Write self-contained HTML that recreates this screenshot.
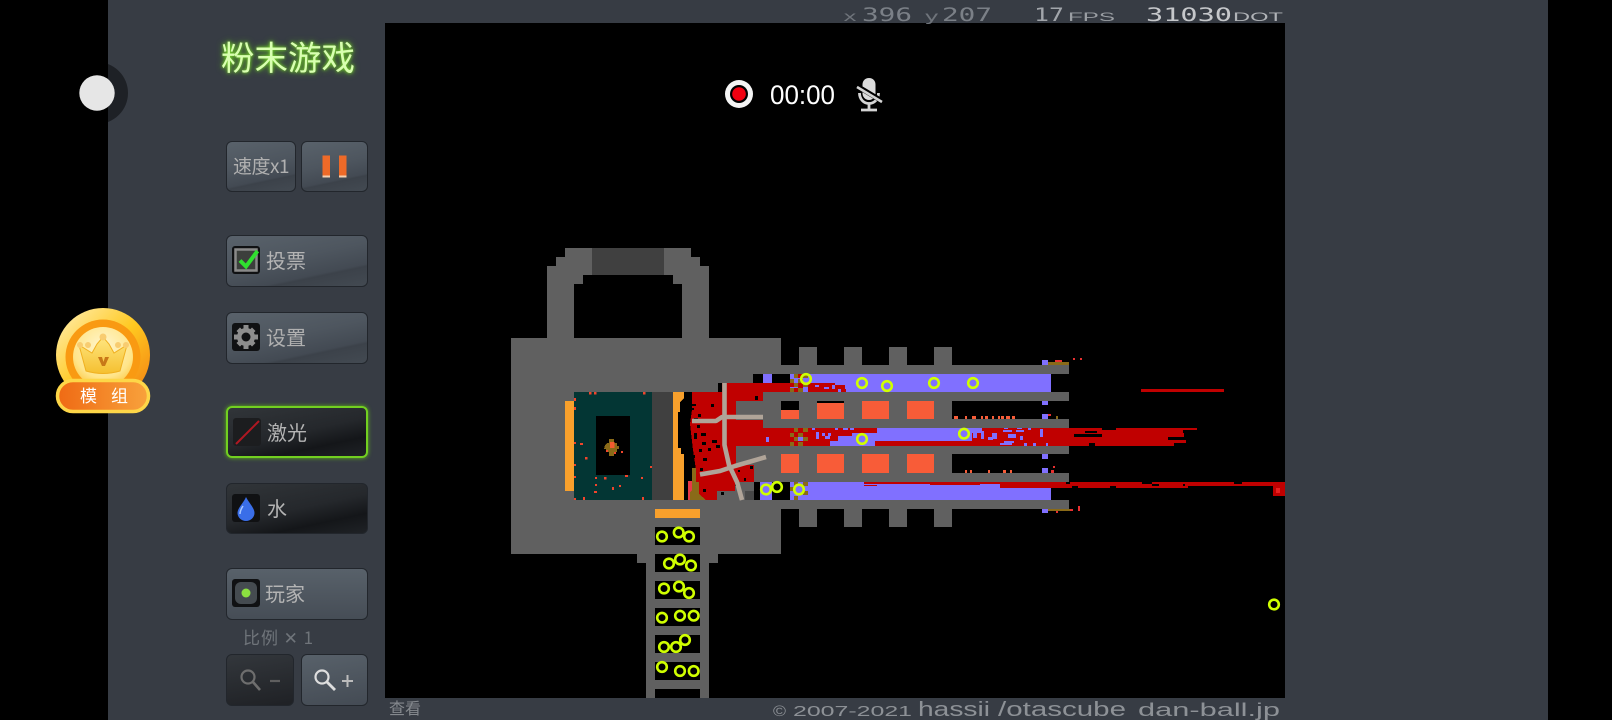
<!DOCTYPE html>
<html><head><meta charset="utf-8"><title>粉末游戏</title>
<style>
html,body{margin:0;padding:0;width:1612px;height:720px;overflow:hidden;background:#000}
body{position:relative;font-family:"Liberation Sans","WenQuanYi Zen Hei","Noto Sans CJK SC",sans-serif}
#panel{position:absolute;left:108px;top:0;width:1440px;height:720px;background:#373c44}
#cv{position:absolute;left:0;top:0}
.b{position:absolute;box-sizing:border-box;border:1.5px solid #22262c;border-radius:6px;background:linear-gradient(168deg,#59626b 0%,#4e565f 45%,#434a53 72%,#3c424a 75%,#434a52 100%);color:#b4b4b4;font-size:20px;line-height:48px;white-space:nowrap;font-family:"WenQuanYi Zen Hei","Noto Sans CJK SC",sans-serif}
.d{background:linear-gradient(168deg,#313539 0%,#25282c 50%,#141619 75%,#1f2226 100%)}
.i{position:absolute;left:5px;top:10px;width:28px;height:28px;background:#101113;border-radius:3px}
.i svg,.b svg{display:block}
.t{position:absolute;left:39px;top:0}
#title{position:absolute;left:221px;top:35px;font:33.5px/42px "WenQuanYi Zen Hei","Noto Sans CJK SC",sans-serif;color:#d8ffb0;text-shadow:0 0 3px #7fe02c,0 0 7px #5cb81e;white-space:nowrap}
</style></head><body>
<div id="panel"></div>
<svg id="cv" width="1612" height="720" viewBox="0 0 1612 720" xmlns="http://www.w3.org/2000/svg">
<defs>
<radialGradient id="gd" cx="50%" cy="35%" r="70%"><stop offset="0" stop-color="#fff6d0"/><stop offset=".7" stop-color="#ffe58a"/><stop offset="1" stop-color="#fbc640"/></radialGradient>
<linearGradient id="go" x1="0" y1="0" x2="1" y2="1"><stop offset="0" stop-color="#fff0b8"/><stop offset=".5" stop-color="#ffc920"/><stop offset="1" stop-color="#f27a10"/></linearGradient>
<linearGradient id="pl" x1="0" y1="0" x2="1" y2="0"><stop offset="0" stop-color="#ef6a14"/><stop offset="1" stop-color="#f8a23c"/></linearGradient>
<linearGradient id="cr" x1="0" y1="0" x2="0" y2="1"><stop offset="0" stop-color="#ffe680"/><stop offset="1" stop-color="#f5c030"/></linearGradient>
</defs>
<circle cx="97" cy="93" r="31" fill="#1e2126"/><rect x="0" y="50" width="108" height="90" fill="#000"/>
<circle cx="97" cy="93" r="17.7" fill="#e6e6e6"/>
<rect x="385" y="23" width="900" height="675" fill="#000"/>

<g shape-rendering="crispEdges">
<g fill="#606060">
<rect x="565" y="248" width="126" height="9"/><rect x="556" y="257" width="144" height="9"/><rect x="547" y="266" width="162" height="72"/>
<rect x="511" y="338" width="270" height="216"/><rect x="637" y="553" width="81" height="10"/><rect x="646" y="553" width="63" height="145"/>
<rect x="781" y="365" width="288" height="9"/><rect x="763" y="392" width="306" height="9"/><rect x="763" y="419" width="306" height="9"/><rect x="763" y="446" width="306" height="8"/><rect x="763" y="473" width="306" height="9"/><rect x="781" y="500" width="288" height="9"/>
<rect x="763" y="392" width="18" height="90"/>
<rect x="799" y="347" width="18" height="18"/><rect x="844" y="347" width="18" height="18"/><rect x="889" y="347" width="18" height="18"/><rect x="934" y="347" width="18" height="18"/>
<rect x="799" y="509" width="18" height="18"/><rect x="844" y="509" width="18" height="18"/><rect x="889" y="509" width="18" height="18"/><rect x="934" y="509" width="18" height="18"/>
<rect x="799" y="401" width="18" height="72"/><rect x="844" y="401" width="18" height="72"/><rect x="889" y="401" width="18" height="72"/><rect x="934" y="401" width="18" height="72"/>
<rect x="781" y="374" width="27" height="18"/><rect x="781" y="482" width="27" height="18"/>
</g>
<rect x="592" y="248" width="72" height="27" fill="#404040"/>
<rect x="583" y="275" width="90" height="9" fill="#000"/><rect x="574" y="284" width="108" height="54" fill="#000"/>

<!-- left chamber -->
<rect x="565" y="401" width="9" height="90" fill="#f8a02c"/>
<rect x="574" y="392" width="78" height="108" fill="#033634"/>
<rect x="596" y="416" width="34" height="59" fill="#000"/>
<rect x="652" y="392" width="21" height="108" fill="#404040"/>
<rect x="673" y="392" width="30" height="108" fill="#000"/>
<path d="M673 392H684V398L680 402V412H678V448H681V454H684V500H673Z" fill="#f8a02c"/>
<path d="M605 445l2-2h2v-4h5v4h3v3h2v3h-2v3h-3v4h-5v-4h-3v-3h-2z" fill="#8a6a18"/><rect x="610" y="442" width="4.5" height="6" fill="#f25c30"/>
<g fill="#f0452c">
<rect x="589" y="392" width="2.5" height="2.5"/><rect x="594" y="392" width="2.5" height="2.5"/><rect x="643" y="392" width="2.5" height="2.5"/><rect x="574" y="398" width="2" height="3"/><rect x="574" y="407" width="2" height="3"/><rect x="580" y="443" width="3" height="2"/><rect x="574" y="442" width="2" height="2"/><rect x="574" y="464" width="2" height="2"/><rect x="585" y="457" width="2.5" height="2.5"/><rect x="574" y="476" width="2" height="2"/><rect x="574" y="498" width="2" height="2"/><rect x="594" y="491" width="3" height="2"/><rect x="595" y="477" width="2" height="2"/><rect x="604" y="477" width="2.5" height="2.5"/><rect x="595" y="484" width="2" height="2"/><rect x="612" y="487" width="2" height="3"/><rect x="619" y="485" width="2" height="2"/><rect x="625" y="475" width="3" height="2"/><rect x="641" y="477" width="2" height="2"/><rect x="650" y="466" width="2" height="2"/><rect x="642" y="497" width="2" height="3"/><rect x="583" y="497" width="2" height="3"/><rect x="621" y="451" width="2" height="2"/><rect x="614" y="452" width="2" height="2"/><rect x="606" y="450" width="2" height="2"/>
</g>

<!-- red area -->
<path d="M692 392H718V383H790V392H763V401H736V420H763V428H790V446H736V465H754V482H735V491H717V500H697L695 488 696 470 693 450 690 424 692 410Z" fill="#c00000"/>
<path d="M717 491H745V500H717Z" fill="#606060"/><path d="M745 491H755V500H745Z" fill="#484848"/>
<path d="M688 481h4v19h-4z" fill="#e83848"/>
<path d="M692 468h4v14h3v12l7 6h-16v-8l2-2z" fill="#8a6a18"/>
<g fill="#000">
<rect x="718" y="383" width="4" height="9"/><rect x="755" y="396" width="3" height="4"/><rect x="692" y="404" width="4" height="2"/><rect x="690" y="408" width="4" height="2"/><rect x="711" y="404" width="3" height="3"/><rect x="694" y="418" width="4" height="3"/><rect x="698" y="414" width="3" height="3"/><rect x="697" y="425" width="3" height="3"/><rect x="701" y="433" width="5" height="3"/><rect x="694" y="433" width="3" height="6"/><rect x="702" y="442" width="4" height="3"/><rect x="712" y="440" width="5" height="3"/><rect x="716" y="445" width="4" height="3"/><rect x="699" y="449" width="3" height="3"/><rect x="708" y="448" width="3" height="3"/><rect x="692" y="455" width="3" height="3"/><rect x="703" y="458" width="4" height="3"/><rect x="700" y="468" width="3" height="3"/><rect x="703" y="489" width="3" height="3"/><rect x="735" y="483" width="3" height="3"/><rect x="744" y="478" width="2" height="3"/><rect x="738" y="470" width="2" height="2"/><rect x="721" y="492" width="3" height="3"/><rect x="750" y="466" width="3" height="3"/>
</g>

<!-- channels -->
<rect x="808" y="374" width="243" height="18" fill="#8070ff"/>
<rect x="808" y="482" width="243" height="18" fill="#8070ff"/>
<rect x="808" y="428" width="240" height="18" fill="#c00000"/>
<path d="M877 428H982V433H972V441H875V446H830V441H838V436H852V433H877Z" fill="#8070ff"/>
<path d="M808 383H835V385H845V389H846V392H808Z" fill="#c00000"/>
<g fill="#8070ff"><rect x="815" y="385" width="4" height="2"/><rect x="824" y="387" width="5" height="2"/><rect x="832" y="385" width="3" height="4"/><rect x="838" y="389" width="3" height="3"/></g>
<rect x="763" y="374" width="9" height="9" fill="#8070ff"/>
<rect x="753" y="374" width="10" height="9" fill="#000"/><rect x="772" y="374" width="18" height="9" fill="#000"/>
<rect x="754" y="482" width="36" height="18" fill="#000"/>
<rect x="760" y="482" width="12" height="18" fill="#8070ff"/>
<rect x="766" y="437" width="3" height="5" fill="#8070ff"/>

<!-- checkers -->
<g fill="#8070ff"><rect x="790" y="374" width="18" height="18"/></g>
<rect x="790" y="428" width="18" height="18" fill="#c00000"/>
<rect x="790" y="482" width="18" height="18" fill="#8070ff"/>
<g fill="#8a6a18">
<rect x="794" y="374" width="4" height="4"/><rect x="803" y="374" width="5" height="4"/><rect x="790" y="379" width="4" height="4"/><rect x="798" y="379" width="5" height="4"/><rect x="794" y="383" width="4" height="4"/><rect x="803" y="383" width="5" height="4"/><rect x="790" y="388" width="4" height="4"/><rect x="798" y="388" width="5" height="4"/>
<rect x="794" y="428" width="4" height="4"/><rect x="803" y="428" width="5" height="4"/><rect x="790" y="433" width="4" height="4"/><rect x="798" y="433" width="5" height="4"/><rect x="794" y="437" width="4" height="4"/><rect x="803" y="437" width="5" height="4"/><rect x="790" y="442" width="4" height="4"/><rect x="798" y="442" width="5" height="4"/>
<rect x="794" y="482" width="4" height="4"/><rect x="803" y="482" width="5" height="4"/><rect x="790" y="487" width="4" height="4"/><rect x="803" y="491" width="5" height="4"/><rect x="794" y="496" width="4" height="4"/>
</g>
<g fill="#c00000"><rect x="798" y="383" width="5" height="5"/><rect x="794" y="388" width="4" height="4"/><rect x="798" y="374" width="5" height="4"/><rect x="790" y="383" width="4" height="4"/></g>
<rect x="798" y="437" width="5" height="4" fill="#8070ff"/>

<!-- channel 2 speckle -->
<g fill="#8070ff">
<rect x="812" y="428" width="3" height="2"/><rect x="816" y="432" width="3" height="7"/><rect x="822" y="433" width="3" height="3"/><rect x="825" y="436" width="5" height="3"/><rect x="828" y="433" width="3" height="3"/><rect x="835" y="428" width="3" height="2"/><rect x="843" y="428" width="5" height="2"/><rect x="850" y="428" width="4" height="2"/>
<rect x="973" y="429" width="4" height="9"/><rect x="981" y="431" width="3" height="8"/><rect x="988" y="437" width="5" height="3"/><rect x="992" y="433" width="5" height="6"/><rect x="1003" y="430" width="9" height="2"/><rect x="1008" y="434" width="8" height="4"/><rect x="1016" y="430" width="8" height="2"/><rect x="1020" y="436" width="3" height="4"/><rect x="1028" y="428" width="3" height="2"/><rect x="1040" y="429" width="3" height="8"/><rect x="1004" y="441" width="10" height="2"/><rect x="1000" y="443" width="12" height="2"/><rect x="1024" y="443" width="3" height="3"/><rect x="1033" y="443" width="3" height="3"/><rect x="1046" y="443" width="2" height="3"/><rect x="1004" y="428" width="4" height="1"/><rect x="1017" y="428" width="5" height="1"/>
</g>
<g fill="#c00000"><rect x="880" y="443" width="90" height="3"/><rect x="864" y="485" width="13" height="1"/></g>

<!-- orange blocks -->
<g fill="#f85c38">
<rect x="781" y="410" width="18" height="9"/><rect x="817" y="403" width="27" height="16"/><rect x="862" y="401" width="27" height="18"/><rect x="907" y="401" width="27" height="18"/>
<rect x="781" y="454" width="18" height="19"/><rect x="817" y="454" width="27" height="19"/><rect x="862" y="454" width="27" height="19"/><rect x="907" y="454" width="27" height="19"/>
<rect x="954" y="416" width="4" height="3"/><rect x="965" y="416" width="2" height="3"/><rect x="972" y="416" width="4" height="3"/><rect x="981" y="416" width="2" height="3"/><rect x="985" y="416" width="3" height="3"/><rect x="992" y="416" width="2" height="3"/><rect x="998" y="416" width="2" height="3"/><rect x="1001" y="416" width="3" height="3"/><rect x="1006" y="416" width="4" height="3"/><rect x="1012" y="416" width="3" height="3"/>
<rect x="965" y="470" width="2" height="3"/><rect x="970" y="470" width="2" height="3"/><rect x="988" y="470" width="2" height="3"/><rect x="1003" y="470" width="3" height="3"/><rect x="1010" y="470" width="2" height="3"/>
</g>

<!-- right overflow -->
<g fill="#8070ff">
<rect x="1042" y="360" width="6" height="5"/><rect x="1042" y="401" width="6" height="4"/><rect x="1042" y="414" width="6" height="5"/><rect x="1042" y="454" width="6" height="5"/><rect x="1042" y="468" width="6" height="5"/><rect x="1042" y="509" width="6" height="4"/>
</g>
<rect x="1048" y="362" width="21" height="3" fill="#8a6a18"/><rect x="1055" y="360" width="7" height="2" fill="#e83030"/>
<rect x="1048" y="509" width="23" height="2" fill="#8a6a18"/><rect x="1070" y="509" width="3" height="2" fill="#e83030"/>
<g fill="#e83030"><rect x="1073" y="358" width="2" height="2"/><rect x="1080" y="358" width="2" height="2"/><rect x="1078" y="506" width="2" height="5"/><rect x="1056" y="511" width="2" height="2"/><rect x="1048" y="414" width="3" height="2"/><rect x="1053" y="466" width="2" height="2"/><rect x="1051" y="470" width="3" height="3"/></g>
<rect x="1056" y="416" width="2" height="3" fill="#8a6a18"/>
<rect x="1141" y="389" width="83" height="3" fill="#c00000"/>
<g fill="#c00000">
<rect x="1048" y="428" width="149" height="2"/><rect x="1048" y="430" width="135" height="3"/><rect x="1048" y="433" width="136" height="4"/><rect x="1048" y="437" width="120" height="3"/><rect x="1048" y="440" width="138" height="3"/><rect x="1048" y="443" width="126" height="3"/>
<rect x="1000" y="482" width="285" height="4"/><rect x="1000" y="486" width="188" height="2"/><rect x="1273" y="486" width="12" height="10"/>
<rect x="864" y="482" width="136" height="2"/><rect x="930" y="484" width="50" height="1"/>
</g>
<rect x="1276" y="488" width="4" height="5" fill="#e82020"/>
<g fill="#000">
<rect x="1074" y="434" width="28" height="3"/><rect x="1089" y="443" width="6" height="3"/><rect x="1085" y="431" width="12" height="2"/><rect x="1102" y="428" width="14" height="2"/>
<rect x="1072" y="486" width="6" height="2"/><rect x="1110" y="486" width="6" height="2"/><rect x="1142" y="482" width="10" height="2"/><rect x="1152" y="484" width="7" height="2"/><rect x="1234" y="482" width="8" height="2"/><rect x="1183" y="484" width="2" height="2"/><rect x="1066" y="482" width="4" height="2"/>
</g>

<!-- bottom ladder -->
<rect x="655" y="509" width="45" height="9" fill="#f8a02c"/>
<g fill="#000">
<rect x="655" y="527" width="45" height="18"/><rect x="655" y="554" width="45" height="18"/><rect x="655" y="581" width="45" height="18"/><rect x="655" y="608" width="45" height="18"/><rect x="655" y="635" width="45" height="18"/><rect x="655" y="662" width="45" height="18"/><rect x="655" y="689" width="45" height="9"/>
</g>
</g>

<!-- tan lines -->
<g fill="none" stroke="#b0a498" stroke-width="4.6" stroke-linejoin="bevel">
<path d="M724.500 383V445L729 465 737 482 742 500"/>
<path d="M692 421H716L722 417H763"/>
<path d="M700 474.500 720 471 735 466 766 457"/>
</g>

<g fill="none" stroke="#d0ff00" stroke-width="2.6">
<circle cx="662" cy="536.5" r="4.8"/><circle cx="678.7" cy="532.5" r="4.8"/><circle cx="689" cy="536.5" r="4.8"/>
<circle cx="669" cy="563.5" r="4.8"/><circle cx="680" cy="559.5" r="4.8"/><circle cx="691" cy="565.5" r="4.8"/>
<circle cx="664" cy="588.5" r="4.8"/><circle cx="679" cy="586.5" r="4.8"/><circle cx="689" cy="593" r="4.8"/>
<circle cx="662" cy="617.7" r="4.8"/><circle cx="680" cy="615.7" r="4.8"/><circle cx="693.7" cy="615.7" r="4.8"/>
<circle cx="664" cy="647" r="4.8"/><circle cx="676" cy="647" r="4.8"/><circle cx="685" cy="640" r="4.8"/>
<circle cx="662" cy="667" r="4.8"/><circle cx="680" cy="671" r="4.8"/><circle cx="693.7" cy="671" r="4.8"/>
<circle cx="806" cy="379" r="4.8"/><circle cx="862" cy="383" r="4.8"/><circle cx="887" cy="386" r="4.8"/><circle cx="934" cy="383" r="4.8"/><circle cx="973" cy="383" r="4.8"/><circle cx="964" cy="433.7" r="4.8"/><circle cx="862" cy="439" r="4.8"/>
<circle cx="766" cy="489.5" r="4.8"/><circle cx="777" cy="487" r="4.8"/><circle cx="799" cy="489.5" r="4.8"/><circle cx="1274" cy="604.5" r="4.8"/>
</g>

<!-- record widget -->
<circle cx="739" cy="94" r="14" fill="#f4f4f4"/><circle cx="739" cy="94" r="9" fill="#000"/><circle cx="739" cy="94" r="6.800" fill="#f00010"/>
<text x="770" y="104" font-family="Liberation Sans,sans-serif" font-size="27" fill="#fff" textLength="65" lengthAdjust="spacingAndGlyphs">00:00</text>
<g fill="none" stroke="#d4d4d4">
<path d="M869 78c4 0 6.500 3 6.500 6.500v9c0 3-2.500 6.500-6.500 6.500s-6.500-3.500-6.500-6.500v-9c0-3.500 2.500-6.500 6.500-6.500z" fill="#dcdcdc" stroke="none"/>
<path d="M859.500 93c0 6 4 10.500 9.500 10.500s9.500-4.500 9.500-10.500" stroke-width="2.800"/>
<path d="M869 104v5M861 110h16" stroke-width="2.800"/>
<path d="M857 86l25 15" stroke="#000" stroke-width="5"/>
<path d="M857 87l25 15" stroke-width="2.600"/>
</g>

<!-- badge -->
<circle cx="103" cy="355" r="47" fill="url(#go)"/>
<circle cx="103" cy="357" r="37.500" fill="#f99a12"/>
<circle cx="103" cy="357" r="30" fill="url(#gd)"/>
<path d="M79 345l13 8 5-9 6-7 6 7 5 9 13-8-7 26q-17 5-34 0z" fill="url(#cr)" stroke="#f0b020" stroke-width="1"/>
<circle cx="103" cy="337" r="3.500" fill="#f8cc70"/><circle cx="88" cy="345" r="3" fill="#f8cc70"/><circle cx="118" cy="345" r="3" fill="#f8cc70"/><circle cx="80" cy="345" r="3" fill="#f8cc70"/><circle cx="126" cy="345" r="3" fill="#f8cc70"/>
<path d="M98 357h4l1.500 5 1.500-5h4l-4 9h-3z" fill="#c87818"/>
<rect x="57.500" y="380.500" width="91" height="31" rx="15.500" fill="url(#pl)" stroke="#fdd648" stroke-width="3.500"/>
<text x="80" y="402" font-family="WenQuanYi Zen Hei,Noto Sans CJK SC,sans-serif" font-size="17" fill="#fff">模</text>
<text x="111" y="402" font-family="WenQuanYi Zen Hei,Noto Sans CJK SC,sans-serif" font-size="17" fill="#fff">组</text>

<!-- top techno text -->
<g font-family="DejaVu Sans Mono,monospace">
<text x="843" y="21" font-size="13" fill="#6f747b" textLength="14" lengthAdjust="spacingAndGlyphs">x</text>
<text x="862" y="21" font-size="19" fill="#7b8087" textLength="50" lengthAdjust="spacingAndGlyphs">396</text>
<text x="924" y="21" font-size="13" fill="#6f747b" textLength="15" lengthAdjust="spacingAndGlyphs">y</text>
<text x="942" y="21" font-size="19" fill="#7b8087" textLength="50" lengthAdjust="spacingAndGlyphs">207</text>
<text x="1034" y="21" font-size="19" fill="#a2a6ab" textLength="30" lengthAdjust="spacingAndGlyphs">17</text>
<text x="1146" y="21" font-size="19" fill="#c6c8cb" textLength="86" lengthAdjust="spacingAndGlyphs">31030</text>
</g>
<g font-family="Liberation Sans,sans-serif">
<text x="1068" y="21" font-size="12" fill="#9a9ea3" textLength="47" lengthAdjust="spacingAndGlyphs">FPS</text>
<text x="1233" y="21" font-size="12" fill="#b0b3b7" textLength="50" lengthAdjust="spacingAndGlyphs">DOT</text>
<text x="773" y="716" font-size="15" fill="#8d9196" textLength="13" lengthAdjust="spacingAndGlyphs">©</text>
<text x="793" y="716" font-size="15" fill="#8d9196" textLength="119" lengthAdjust="spacingAndGlyphs">2007-2021</text>
<text x="918" y="716" font-size="20" fill="#8d9196" textLength="72" lengthAdjust="spacingAndGlyphs">hassii</text>
<text x="998" y="716" font-size="20" fill="#8d9196" textLength="128" lengthAdjust="spacingAndGlyphs">/otascube</text>
<text x="1138" y="716" font-size="18" fill="#8d9196" textLength="142" lengthAdjust="spacingAndGlyphs">dan-ball.jp</text>
</g>
<text x="389" y="714" font-family="WenQuanYi Zen Hei,Noto Sans CJK SC,sans-serif" font-size="16" fill="#85898e">查看</text>
<text x="243" y="644" font-family="WenQuanYi Zen Hei,Noto Sans CJK SC,sans-serif" font-size="17" fill="#6f747a" textLength="70">比例 ✕ 1</text>
</svg>

<div id="title">粉末游戏</div>

<div class="b" style="left:226px;top:141px;width:70px;height:51px;font-size:19px;text-align:center;letter-spacing:-.5px;color:#b0b0b0">速度x1</div>
<div class="b" style="left:301px;top:141px;width:67px;height:51px"><svg width="64" height="48" style="position:absolute;left:0;top:0"><rect x="20.500" y="13.500" width="7.500" height="22" fill="#ee6a28"/><rect x="37" y="13.500" width="7.500" height="22" fill="#ee6a28"/><rect x="20.500" y="33.500" width="7.500" height="2" fill="#f5d0b0"/><rect x="37" y="33.500" width="7.500" height="2" fill="#f5d0b0"/></svg></div>

<div class="b" style="left:226px;top:235px;width:142px;height:52px"><div class="i"><svg width="28" height="28"><rect x="3.500" y="3.500" width="21" height="21" fill="#3c3f3c" stroke="#8a8a8a" stroke-width="2.500"/><path d="M8 14.500l6 6 11.500-15.500" fill="none" stroke="#2fe02f" stroke-width="4"/></svg></div><span class="t">投票</span></div>

<div class="b" style="left:226px;top:312px;width:142px;height:52px"><div class="i"><svg width="28" height="28"><g fill="#8d8d8d"><circle cx="14" cy="14" r="9"/><path d="M11.500 2h5v6h-5zM11.500 20h5v6h-5zM2 11.500h6v5H2zM20 11.500h6v5h-6zM4.500 8l3.500-3.500 4 4L8.500 12zM20 4.500L23.500 8l-4 4L16 8.500zM4.500 20l4-4 3.500 3.500-4 4zM16 19.500l3.500-3.500 4 4-3.500 3.500z"/></g><circle cx="14" cy="14" r="4.500" fill="#101113"/></svg></div><span class="t" style="color:#b0b0b0">设置</span></div>

<div class="b d" style="left:226px;top:406px;width:142px;height:52px;border:2px solid #72d020;box-shadow:0 0 4px #5fb81a"><div class="i" style="background:#1c1d1f"><svg width="28" height="28"><path d="M3 26L26 3" stroke="#b01822" stroke-width="2"/></svg></div><span class="t">激光</span></div>

<div class="b d" style="left:226px;top:483px;width:142px;height:51px"><div class="i"><svg width="28" height="28"><path d="M14 3c3 6 8.500 11 8.500 16a8.500 8 0 0 1-17 0c0-5 6-10 8.500-16z" fill="#3a6ee8"/><path d="M11 12c-2 3-3 5-3 8" stroke="#a8c8ff" stroke-width="1.500" fill="none"/></svg></div><span class="t" style="left:40px">水</span></div>

<div class="b" style="left:226px;top:568px;width:142px;height:52px;background:linear-gradient(180deg,#58616a,#464d56)"><div class="i"><svg width="28" height="28"><rect x="3" y="3" width="22" height="22" rx="6" fill="#454b50"/><circle cx="14" cy="14" r="4.500" fill="#8ce040"/></svg></div><span class="t" style="left:38px">玩家</span></div>

<div class="b d" style="left:226px;top:654px;width:68px;height:52px;background:linear-gradient(170deg,#33373c,#1f2125)"><svg width="64" height="48" style="position:absolute;left:0;top:0"><circle cx="21" cy="22" r="6.500" fill="none" stroke="#6e6e6e" stroke-width="2.200"/><path d="M26 27l7 8" stroke="#6e6e6e" stroke-width="2.600"/><path d="M43 26h10" stroke="#5f5f5f" stroke-width="2.200"/></svg></div>
<div class="b" style="left:301px;top:654px;width:67px;height:52px;background:linear-gradient(170deg,#58616a,#444b54)"><svg width="64" height="48" style="position:absolute;left:0;top:0"><circle cx="20" cy="22" r="6.500" fill="none" stroke="#dedede" stroke-width="2.200"/><path d="M25 27l8 8" stroke="#dedede" stroke-width="2.800"/><path d="M40 26h11M45.500 20v12" stroke="#bcbcbc" stroke-width="2"/></svg></div>
</body></html>
